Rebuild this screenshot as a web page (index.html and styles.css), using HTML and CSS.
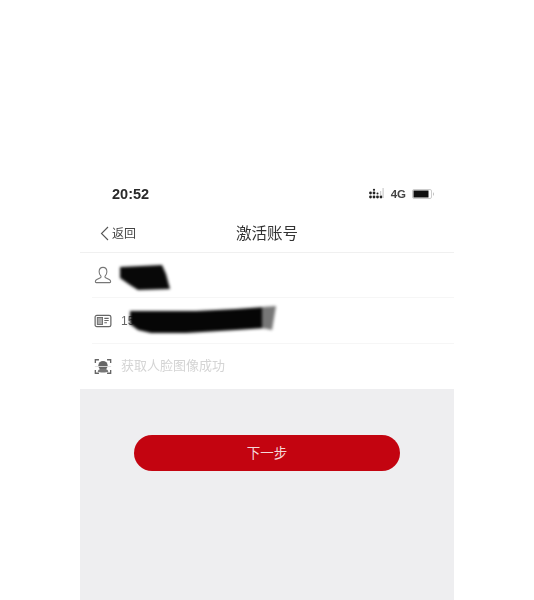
FILE: index.html
```html
<!DOCTYPE html>
<html lang="zh-CN">
<head>
    <meta charset="UTF-8">
    <meta name="viewport" content="width=device-width, initial-scale=1.0">
    <title>激活账号</title>
    <link rel="stylesheet" href="styles.css">
</head>
<body>
    <div class="phone">

        <!-- Status bar -->
        <div class="status-bar">
            <span class="time">20:52</span>
            <div class="status-icons">
                <svg width="16" height="12" viewBox="0 0 16 12">
                    <g fill="#222">
                        <circle cx="1.500" cy="5" r="1.400"/>
                        <circle cx="5" cy="5" r="1.400"/>
                        <circle cx="5" cy="1.800" r="1.100"/>
                        <circle cx="1.500" cy="9" r="1.400"/>
                        <circle cx="5" cy="9" r="1.400"/>
                        <circle cx="8.500" cy="9" r="1.400"/>
                        <circle cx="12" cy="9" r="1.400"/>
                        <circle cx="8.500" cy="5.500" r="1"/>
                    </g>
                    <rect x="11" y="3" width="1.200" height="4" fill="#ccc"/>
                    <rect x="13.500" y="0" width="1.200" height="10" fill="#ccc"/>
                </svg>
                <span class="network">4G</span>
                <svg width="23" height="10" viewBox="0 0 23 10">
                    <rect x="0.500" y="0.500" width="19" height="9" rx="1.500" fill="#fff" stroke="#ccc"/>
                    <rect x="1.500" y="1.500" width="15" height="7" fill="#111"/>
                    <path d="M21 3.200c1 .4 1 3.200 0 3.600z" fill="#aaa"/>
                </svg>
            </div>
        </div>

        <!-- Navigation -->
        <div class="nav-bar">
            <div class="back">
                <svg width="9" height="15" viewBox="0 0 9 15">
                    <path d="M8 1L1.500 7.500 8 14" fill="none" stroke="#555" stroke-width="1.100"/>
                </svg>
                <span>返回</span>
            </div>
            <div class="nav-title">激活账号</div>
        </div>

        <!-- Form rows -->
        <div class="form">
            <div class="row row-first">
                <svg class="row-icon" width="18" height="20" viewBox="0 0 20 20">
                    <path d="M10 1.500c-2.800 0-4.300 2.200-4.300 4.800 0 2 .8 3.500 1.800 4.600.6.700.4 1.700-.4 2.100l-4 2c-1 .5-1.600 1.300-1.600 2.500 0 .6.400 1 1 1h15c.6 0 1-.4 1-1 0-1.200-.6-2-1.600-2.500l-4-2c-.8-.4-1-1.400-.4-2.100 1-1.100 1.800-2.600 1.800-4.600 0-2.600-1.500-4.800-4.300-4.800z" fill="none" stroke="#777" stroke-width="1.200"/>
                </svg>
                <svg class="scribble scribble-name" width="56" height="28" viewBox="0 0 56 28">
                    <path d="M2 4L44 2L48 11L52 26L20 27L12 22L2 15z" fill="#080808"/>
                </svg>
            </div>
            <div class="row">
                <svg class="row-icon" width="18" height="14" viewBox="0 0 20 16">
                    <rect x="1" y="1.500" width="18" height="13" rx="2" fill="none" stroke="#666" stroke-width="1.400"/>
                    <rect x="3.500" y="4" width="6" height="8" fill="#aaa" stroke="#666"/>
                    <path d="M11.500 5h5M11.500 7.500h5M11.500 10h3" stroke="#666" stroke-width="1.200"/>
                </svg>
                <span class="row-text id-text">15</span>
                <svg class="scribble scribble-id" width="160" height="34" viewBox="0 0 160 34">
                    <path d="M4 7L70 7L110 5L138 3L140 24L110 26L60 29L25 29L12 26L4 20z" fill="#060606"/>
                    <path d="M136 3L150 2L146 26L136 24z" fill="#777"/>
                </svg>
            </div>
            <div class="row row-last">
                <svg class="row-icon" width="18" height="19" viewBox="0 0 20 20">
                    <path d="M1.500 6V2.500h4M14.500 2.500h4V6M18.500 14v3.500h-4M5.500 17.500h-4V14" fill="none" stroke="#666" stroke-width="1.500"/>
                    <circle cx="10" cy="9" r="5.200" fill="#666"/>
                    <path d="M4 15.500c1-2.500 3-3 6-3s5 .5 6 3c-1.500 1.500-10.500 1.500-12 0z" fill="#777"/>
                    <path d="M1 10h18" stroke="#ddd" stroke-width="1"/>
                </svg>
                <span class="row-text hint">获取人脸图像成功</span>
            </div>
        </div>

        <div class="footer">
            <button class="next-btn">下一步</button>
        </div>
    </div>
</body>
</html>
```

FILE: styles.css
```css
/* Global Styles */
html, body {
    height: 100%;
}

body {
    margin: 0;
    background-color: #fff;
    font-family: 'Noto Sans CJK SC', 'Liberation Sans', sans-serif;
    color: #333;
    overflow: hidden;
}

.phone {
    width: 374px;
    height: 428px;
    margin: 172px 0 0 80px;
    display: flex;
    flex-direction: column;
    filter: blur(0.4px);
}

.status-bar {
    height: 44px;
    flex: none;
    display: flex;
    justify-content: space-between;
    align-items: center;
    padding: 0 19px 0 32px;
}

.time {
    font-family: 'Liberation Sans', sans-serif;
    font-size: 14.500px;
    font-weight: bold;
    color: #2a2a2a;
}

.status-icons {
    display: flex;
    align-items: center;
    gap: 6px;
}

.network {
    font-family: 'Liberation Sans', sans-serif;
    font-size: 11.500px;
    font-weight: bold;
    color: #444;
}

.nav-bar {
    height: 36px;
    flex: none;
    display: flex;
    align-items: center;
    justify-content: center;
    position: relative;
    border-bottom: 1px solid #f0f0f0;
}

.back {
    position: absolute;
    left: 20px;
    top: 9px;
    display: flex;
    align-items: center;
    gap: 3px;
    font-size: 12px;
    line-height: 16px;
    color: #444;
}

.nav-title {
    font-size: 15.500px;
    color: #333;
    padding-bottom: 4px;
}

.row {
    height: 45px;
    margin-left: 12px;
    padding-left: 2px;
    display: flex;
    align-items: center;
    position: relative;
    border-bottom: 1px solid #f6f6f6;
}

.row-first {
    height: 44px;
}

.row-last {
    border-bottom: 0;
}

.row-icon {
    flex: none;
}

.row-text {
    margin-left: 9px;
    font-size: 12px;
    color: #666;
}

.id-text {
    font-family: 'Liberation Sans', sans-serif;
}

.hint {
    font-size: 13px;
    color: #d4d4d4;
    padding-bottom: 4px;
}

.scribble {
    position: absolute;
    filter: blur(1.800px);
}

.scribble-name {
    left: 26px;
    top: 10px;
}

.scribble-id {
    left: 34px;
    top: 6px;
}

.footer {
    flex: 1;
    background-color: #eeeef0;
    display: flex;
    justify-content: center;
    align-items: flex-start;
    padding-top: 46px;
}

.next-btn {
    width: 266px;
    height: 36px;
    border: none;
    border-radius: 18px;
    background-color: #c30410;
    color: #f3d9da;
    font-family: inherit;
    font-size: 13.500px;
    padding: 0 0 2px;
}
```
